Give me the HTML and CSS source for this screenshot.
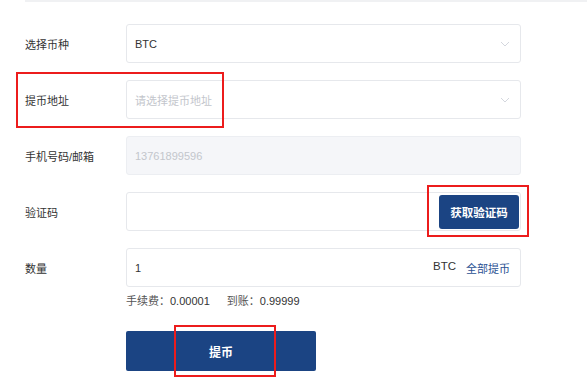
FILE: index.html
```html
<!DOCTYPE html>
<html lang="zh">
<head>
<meta charset="utf-8">
<link rel="stylesheet" href="styles.css">
</head>
<body>
<div class="page">
  <div class="topline"></div>
  <form class="form">
    <div class="row">
      <label class="label">选择币种</label>
      <div class="field select">
        <span class="value">BTC</span>
        <svg class="chev" width="10" height="6" viewBox="0 0 10 6"><path d="M1 1l4 4 4-4" fill="none" stroke="#d4d7de" stroke-width="1"/></svg>
      </div>
    </div>
    <div class="row">
      <label class="label">提币地址</label>
      <div class="field select">
        <span class="placeholder">请选择提币地址</span>
        <svg class="chev" width="10" height="6" viewBox="0 0 10 6"><path d="M1 1l4 4 4-4" fill="none" stroke="#d4d7de" stroke-width="1"/></svg>
      </div>
      <div class="mark mark-addr"></div>
    </div>
    <div class="row">
      <label class="label">手机号码/邮箱</label>
      <div class="field disabled">
        <span class="placeholder">13761899596</span>
      </div>
    </div>
    <div class="row">
      <label class="label">验证码</label>
      <div class="field code">
        <button type="button" class="btn-code">获取验证码</button>
      </div>
      <div class="mark mark-code"></div>
    </div>
    <div class="row">
      <label class="label">数量</label>
      <div class="field">
        <span class="value">1</span>
        <span class="suffix"><span class="unit">BTC</span><a class="all">全部提币</a></span>
      </div>
    </div>
    <div class="fee">
      <span><span class="k">手续费：</span>0.00001</span>
      <span><span class="k">到账：</span>0.99999</span>
    </div>
    <div class="submit-row">
      <button type="button" class="btn-submit">提币</button>
      <div class="mark mark-submit"></div>
    </div>
  </form>
</div>
</body>
</html>
```
FILE: styles.css
```css
* { box-sizing: border-box; }
html, body { margin: 0; padding: 0; background: #fff; }
body {
  font-family: "Liberation Sans", "Noto Sans CJK SC", sans-serif;
  font-size: 11px;
  color: #333;
  width: 587px;
  height: 390px;
  overflow: hidden;
}
.page { position: relative; }
.topline {
  margin-left: 25px;
  height: 2px;
  background: #f0f1f3;
}
.form {
  position: relative;
  padding: 22px 0 0 25px;
  display: flex;
  flex-direction: column;
  gap: 17px;
}
.row {
  position: relative;
  display: flex;
  align-items: center;
  height: 39px;
}
.label {
  width: 101px;
  flex: none;
  color: #333;
  font-size: 11px;
}
.field {
  width: 395px;
  height: 39px;
  border: 1px solid #e6e8ec;
  border-radius: 3px;
  display: flex;
  align-items: center;
  padding: 0 10px 0 8px;
  background: #fff;
}
.field .value { color: #333; flex: 1; }
.placeholder { color: #c3c6cc; flex: 1; }
.disabled { background: #f5f6f9; border-color: #eceef2; }
.code { justify-content: flex-end; padding-right: 1px; }
.btn-code {
  width: 80px;
  height: 34px;
  border: none;
  border-radius: 3px;
  background: #1b4483;
  color: #fff;
  font-family: inherit;
  font-size: 11.5px;
  font-weight: bold;
  padding: 0;
}
.suffix { display: flex; gap: 10px; }
.unit { color: #333; font-size: 11.5px; }
.all { color: #2a5193; }
.fee {
  margin: -10px 0 0 101px;
  display: flex;
  gap: 17px;
  color: #333;
  font-size: 11px;
  line-height: 14px;
}
.fee .k { color: #555; }
.submit-row {
  position: relative;
  margin: 6px 0 0 101px;
}
.btn-submit {
  width: 190px;
  height: 40px;
  border: none;
  border-radius: 2px;
  background: #1b4483;
  color: #fff;
  font-family: inherit;
  font-size: 12px;
  font-weight: bold;
  padding: 0;
  display: block;
}
.mark {
  position: absolute;
  border: 2px solid #ec1c1c;
  pointer-events: none;
}
.mark-addr { left: -9px; top: -8px; width: 208px; height: 56px; }
.mark-code { left: 402px; top: -7px; width: 102px; height: 52px; }
.mark-submit { left: 48px; top: -6px; width: 102px; height: 52px; }
```
